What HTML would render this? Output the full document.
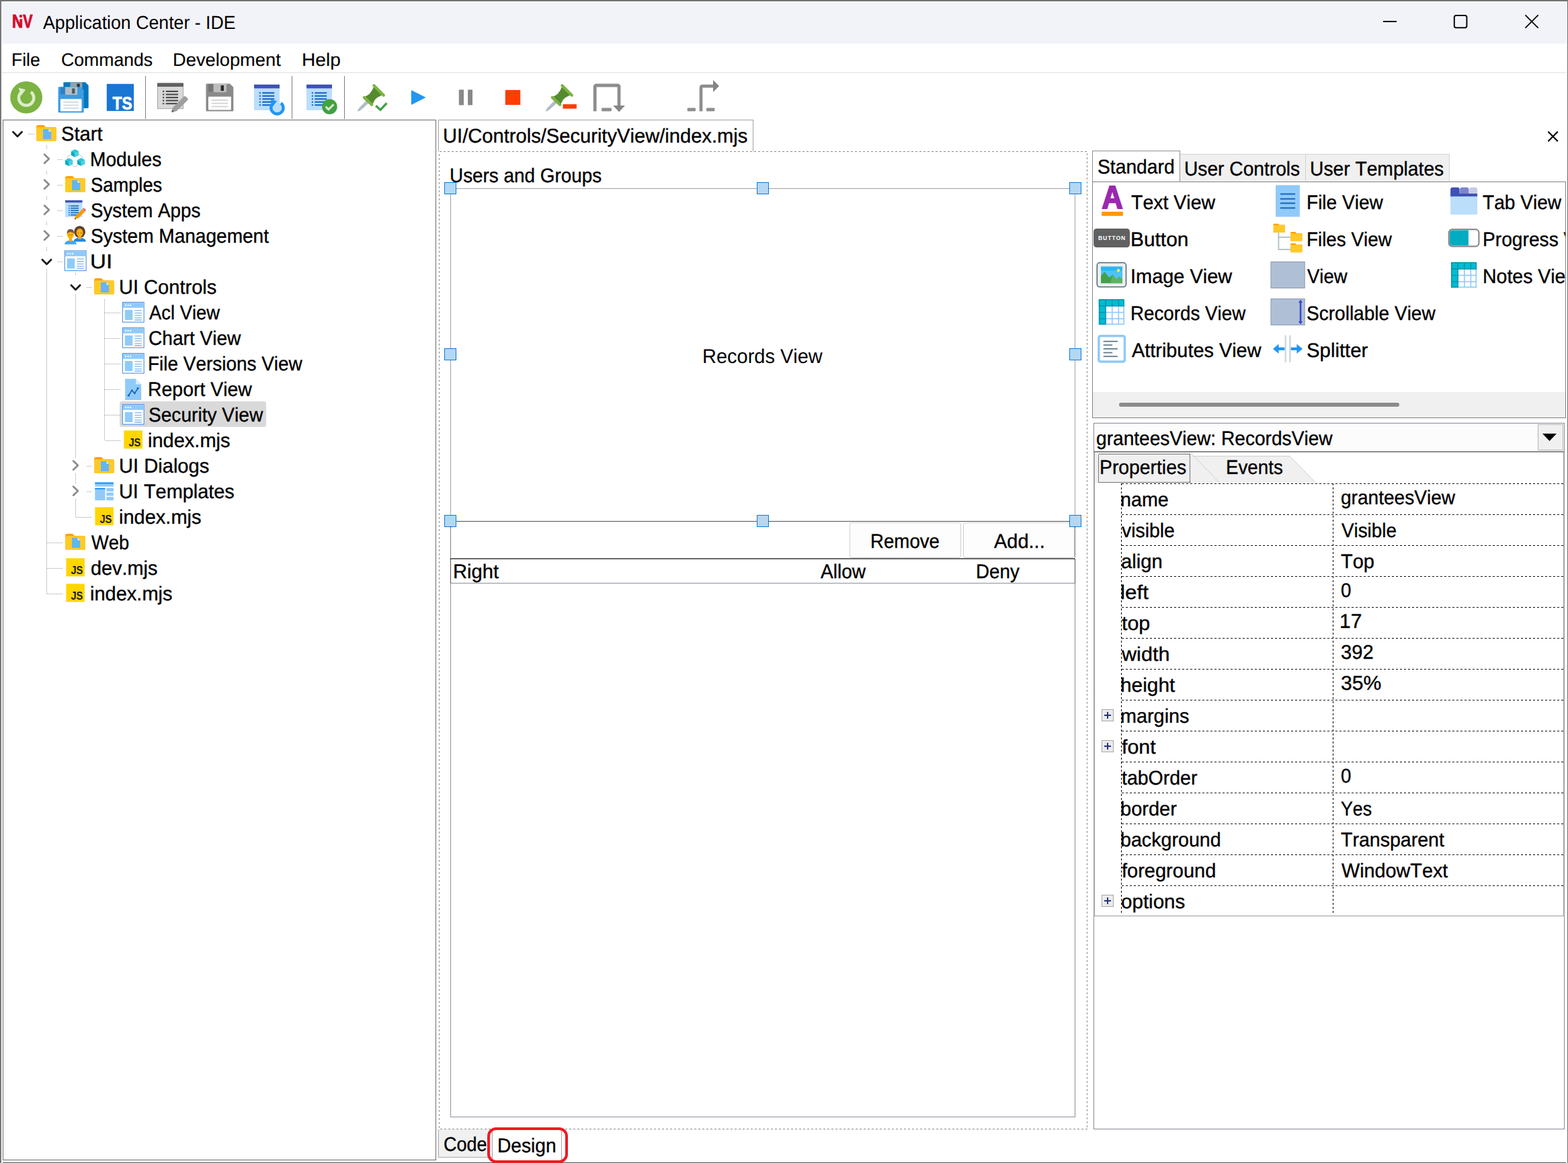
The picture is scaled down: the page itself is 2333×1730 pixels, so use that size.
<!DOCTYPE html>
<html lang="en"><head><meta charset="utf-8"><title>Application Center - IDE</title>
<style>
*{box-sizing:border-box;margin:0;padding:0}
html,body{width:2333px;height:1730px;overflow:hidden;background:#fff}
body{position:relative;font-family:"Liberation Sans",sans-serif;color:#000}
.b{position:absolute;display:block}
.t{position:absolute;white-space:pre;display:block;transform-origin:0 0;font-kerning:none;font-variant-ligatures:none;text-rendering:geometricPrecision}
</style></head><body>
<div class="b" style="left:0px;top:0px;width:2333px;height:65px;background:#f2f3f9"></div>
<div class="b" style="left:0px;top:0px;width:2333px;height:2px;background:#737373"></div>
<div class="b" style="left:0px;top:2px;width:2px;height:1728px;background:#777777"></div>
<div class="b" style="left:2px;top:2px;width:1px;height:63px;background:#fbfbff"></div>
<div class="b" style="left:2px;top:2px;width:2330px;height:1px;background:#fbfbff"></div>
<div class="b" style="left:2332px;top:2px;width:1px;height:1728px;background:#6c6c6c"></div>
<div class="b" style="left:4px;top:1729px;width:2326px;height:1px;background:#545454"></div>
<div class="b" style="left:2px;top:107px;width:2329px;height:2px;background:#ededed"></div>
<div class="b" style="left:216px;top:113px;width:1px;height:64px;background:#7e7e7e"></div>
<div class="b" style="left:434px;top:113px;width:1px;height:64px;background:#7e7e7e"></div>
<div class="b" style="left:512px;top:113px;width:1px;height:64px;background:#7e7e7e"></div>
<div class="b" style="left:4px;top:178px;width:645px;height:1548px;border:1px solid #6c6c6c;background:#fff"></div>
<div class="b" style="left:178px;top:597px;width:218px;height:38px;background:#d9d9d9;border-radius:3px"></div>
<div class="b" style="left:652px;top:178px;width:469px;height:47px;border:1px solid #a3a3a3;border-bottom:none;background:#fff"></div>
<div class="b" style="left:670px;top:280px;width:930px;height:496px;border:1px solid #a0a0a0;border-bottom:none"></div>
<div class="b" style="left:1263.5px;top:777px;width:166px;height:52.5px;border:1px solid #d0d0d0;border-radius:4px;background:#fdfdfd"></div>
<div class="b" style="left:1432.5px;top:777px;width:166.5px;height:52.5px;border:1px solid #d0d0d0;border-radius:4px;background:#fdfdfd"></div>
<div class="b" style="left:670px;top:831px;width:930px;height:831px;border:1px solid #8a8f99;border-top:none"></div>
<div class="b" style="left:671px;top:867px;width:928px;height:1px;background:#8a8f99"></div>
<div class="b" style="left:652px;top:1680px;width:81px;height:42px;background:#f0f0f0;border:1px solid #ababab;border-top:none;border-right:none"></div>
<div class="b" style="left:732px;top:1680px;width:104px;height:46px;background:#fff;border:1px solid #a6a6a6;border-top:none;border-bottom:none"></div>
<div class="b" style="left:1625px;top:270px;width:705px;height:352px;border:1px solid #828282;background:#fff"></div>
<div class="b" style="left:1626px;top:583px;width:703px;height:38px;background:#f0f0f0"></div>
<div class="b" style="left:1665px;top:598.5px;width:417px;height:6.2px;background:#8b8b8b;border-radius:3.1px"></div>
<div class="b" style="left:1755px;top:229px;width:188px;height:42px;background:#f0f0f0;border:1px solid #d2d2d2;border-bottom:1px solid #828282"></div>
<div class="b" style="left:1942px;top:229px;width:215px;height:42px;background:#f0f0f0;border:1px solid #d2d2d2;border-bottom:1px solid #828282"></div>
<div class="b" style="left:1625px;top:224px;width:131px;height:46px;background:#fff;border:1px solid #909090;border-bottom:none"></div>
<div class="b" style="left:2150px;top:271px;width:179px;height:312px;overflow:hidden"><span class="t" style="left:56.11px;top:11px;font-size:29.5px;line-height:39px;height:39px;transform:scaleX(0.9520);-webkit-text-stroke:0.35px #000;">Tab View</span><span class="t" style="left:55.93px;top:66px;font-size:29.5px;line-height:39px;height:39px;transform:scaleX(0.9550);-webkit-text-stroke:0.35px #000;">Progress View</span><span class="t" style="left:56.41px;top:121px;font-size:29.5px;line-height:39px;height:39px;transform:scaleX(0.9650);-webkit-text-stroke:0.35px #000;">Notes View</span></div>
<div class="b" style="left:1627px;top:629px;width:701px;height:1051px;border:1px solid #868b94;background:#fff"></div>
<div class="b" style="left:1627px;top:672px;width:2px;height:691px;background:#a2a2a2"></div>
<div class="b" style="left:2326px;top:672px;width:2px;height:691px;background:#a2a2a2"></div>
<div class="b" style="left:1628px;top:630px;width:698px;height:42px;background:#fcfcfc"></div>
<div class="b" style="left:1627px;top:671px;width:701px;height:2px;background:#8a8a8a"></div>
<div class="b" style="left:2288px;top:631px;width:38px;height:39px;background:#f0f0f0;border:1px solid #b4b4b4"></div>
<div class="b" style="left:1629px;top:673px;width:697px;height:46px;background:#fff"></div>
<div class="b" style="left:1639px;top:1055px;width:18px;height:18px;border:1px solid #a8a8a8;background:#ebebeb"></div>
<div class="b" style="left:1639px;top:1101px;width:18px;height:18px;border:1px solid #a8a8a8;background:#ebebeb"></div>
<div class="b" style="left:1639px;top:1331px;width:18px;height:18px;border:1px solid #a8a8a8;background:#ebebeb"></div>
<div class="b" style="left:1629px;top:1362px;width:697px;height:1px;background:#9a9a9a"></div>
<svg class="b" style="left:0;top:0;pointer-events:none" width="2333" height="1730" viewBox="0 0 2333 1730">
<text transform="translate(19.40 41.2) scale(0.8255 1)" x="-1.82" y="0" font-family="Liberation Sans, sans-serif" font-weight="700" font-size="27.2" fill="#d60a2b" stroke="#d60a2b" stroke-width="0.9">N</text><text transform="translate(34.40 41.2) scale(0.7878 1)" x="-0.19" y="0" font-family="Liberation Sans, sans-serif" font-weight="700" font-size="27.2" fill="#d60a2b" stroke="#d60a2b" stroke-width="0.9">V</text><rect x="28.4" y="20" width="5.2" height="8.3" fill="#f2f3f9"/><circle cx="30.9" cy="24.1" r="2.25" fill="#d60a2b"/>
<path d="M2058 32 H2078" stroke="#0a0a0a" stroke-width="2" fill="none"/>
<rect x="2163.8" y="23" width="18.6" height="18.2" rx="2.8" fill="none" stroke="#0a0a0a" stroke-width="2"/>
<path d="M2269.5 22.3 L2288.7 41.7 M2288.7 22.3 L2269.5 41.7" stroke="#0a0a0a" stroke-width="1.9" fill="none"/>
<circle cx="39.1" cy="144.9" r="23.9" fill="#7cb342"/>
<path d="M46.00 136.77 A11.2 11.2 0 1 1 32.20 136.77" fill="none" stroke="#dcedc8" stroke-width="4.4"/><path d="M27.55 130.57 L38.09 133.36 L31.58 142.04 Z" fill="#dcedc8"/>
<g transform="translate(94.4 122.2)"><path d="M1 0 H32.451 L37.3 4.849 V37.8 Q37.3 38.8 36.3 38.8 H1 Q0 38.8 0 37.8 V1 Q0 0 1 0 Z" fill="#0277bd"/><path d="M10.071 0.3 H27.975 V10.476 Q27.975 12.028 26.483 12.028 H11.563 Q10.071 12.028 10.071 10.476 Z" fill="#90a4ae"/><rect x="20.142" y="2.328" width="4.103" height="7.76" fill="#263238"/><rect x="3.1705" y="18.236" width="30.959" height="18.624" rx="0.8" fill="#0277bd"/><rect x="7.46" y="22.31" width="22.38" height="1.746" fill="#0277bd"/><rect x="7.46" y="26.772" width="22.38" height="1.746" fill="#0277bd"/><rect x="7.46" y="31.234" width="22.38" height="1.746" fill="#0277bd"/></g>
<g transform="translate(86.6 129.2)"><path d="M1 0 H33.147 L38.1 4.953 V37.3 Q38.1 38.3 37.1 38.3 H1 Q0 38.3 0 37.3 V1 Q0 0 1 0 Z" fill="#3d9be0"/><rect x="3.429" y="0.4" width="7.62" height="10.724" fill="#2d80c3"/><path d="M10.287 0.3 H28.575 V10.341 Q28.575 11.873 27.051 11.873 H11.811 Q10.287 11.873 10.287 10.341 Z" fill="#b0bec5"/><rect x="20.574" y="2.298" width="4.191" height="7.66" fill="#455a64"/><rect x="3.2385" y="18.001" width="31.623" height="18.384" rx="0.8" fill="#ffffff"/><rect x="7.62" y="22.0225" width="22.86" height="1.7235" fill="#cfd8dc"/><rect x="7.62" y="26.427" width="22.86" height="1.7235" fill="#cfd8dc"/><rect x="7.62" y="30.8315" width="22.86" height="1.7235" fill="#cfd8dc"/></g>
<rect x="158.8" y="124.8" width="40.3" height="40.3" fill="#1976d2"/>
<text x="167.6" y="162.8" font-family="Liberation Sans, sans-serif" font-weight="700" font-size="27.6" fill="#fff" stroke="#fff" stroke-width="0.7" textLength="29.2" lengthAdjust="spacingAndGlyphs">TS</text>
<g transform="translate(234 123.5)"><rect x="0.5" y="0.5" width="38" height="37.6" fill="#d9d9d9" stroke="#a6a6a6" stroke-width="1"/><rect x="0" y="0" width="39" height="5.6" rx="1" fill="#616161"/><rect x="8" y="11.4" width="2.3" height="2.1" fill="#4a4a4a"/><rect x="12.8" y="11.4" width="18.2" height="2.1" fill="#4a4a4a"/><rect x="8" y="15.95" width="2.3" height="2.1" fill="#4a4a4a"/><rect x="12.8" y="15.95" width="18.2" height="2.1" fill="#4a4a4a"/><rect x="8" y="20.5" width="2.3" height="2.1" fill="#4a4a4a"/><rect x="12.8" y="20.5" width="18.2" height="2.1" fill="#4a4a4a"/><rect x="8" y="25.05" width="2.3" height="2.1" fill="#4a4a4a"/><rect x="12.8" y="25.05" width="18.2" height="2.1" fill="#4a4a4a"/><rect x="8" y="29.6" width="2.3" height="2.1" fill="#4a4a4a"/><rect x="12.8" y="29.6" width="18.2" height="2.1" fill="#4a4a4a"/><path d="M21.4 41.8 L23.6 36 L39.6 20 Q41 18.8 42.4 20 L45.2 22.8 Q46.4 24.2 45.2 25.6 L29 41.6 L22 44 Z" fill="#9e9e9e"/><path d="M21.4 41.8 L22.4 39.6 L24.6 41.8 L22 43.6 Z" fill="#616161"/></g>
<g transform="translate(306.5 124.5)"><path d="M1 0 H35.496 L40.8 5.304 V40 Q40.8 41 39.8 41 H1 Q0 41 0 40 V1 Q0 0 1 0 Z" fill="#8a8a8a"/><rect x="3.672" y="0.4" width="8.16" height="11.48" fill="#757575"/><path d="M11.016 0.3 H30.6 V11.07 Q30.6 12.71 28.968 12.71 H12.648 Q11.016 12.71 11.016 11.07 Z" fill="#bdbdbd"/><rect x="22.032" y="2.46" width="4.488" height="8.2" fill="#2b2b2b"/><rect x="3.468" y="19.27" width="33.864" height="19.68" rx="0.8" fill="#ffffff"/><rect x="8.16" y="23.575" width="24.48" height="1.845" fill="#d4d4d4"/><rect x="8.16" y="28.29" width="24.48" height="1.845" fill="#d4d4d4"/><rect x="8.16" y="33.005" width="24.48" height="1.845" fill="#d4d4d4"/></g>
<g transform="translate(378 125.8)"><rect width="38" height="38.2" fill="#bbdefb"/><rect width="38" height="5.6" fill="#3f51b5"/><rect x="7.8" y="11.4" width="2.1" height="2.1" fill="#1565c0"/><rect x="12.2" y="11.4" width="18" height="2.1" fill="#1565c0"/><rect x="7.8" y="15.9" width="2.1" height="2.1" fill="#1565c0"/><rect x="12.2" y="15.9" width="18" height="2.1" fill="#1565c0"/><rect x="7.8" y="20.4" width="2.1" height="2.1" fill="#1565c0"/><rect x="12.2" y="20.4" width="18" height="2.1" fill="#1565c0"/><rect x="7.8" y="24.9" width="2.1" height="2.1" fill="#1565c0"/><rect x="12.2" y="24.9" width="18" height="2.1" fill="#1565c0"/><rect x="7.8" y="29.4" width="2.1" height="2.1" fill="#1565c0"/><rect x="12.2" y="29.4" width="18" height="2.1" fill="#1565c0"/></g>
<circle cx="412.4" cy="160.4" r="8" fill="#bbdefb"/>
<path d="M418.00 153.23 A9.1 9.1 0 1 1 406.80 153.23" fill="none" stroke="#2196f3" stroke-width="4.4"/><path d="M402.60 147.63 L412.12 150.15 L406.24 157.99 Z" fill="#2196f3"/>
<g transform="translate(456 125.8)"><rect width="38" height="38.2" fill="#bbdefb"/><rect width="38" height="5.6" fill="#3f51b5"/><rect x="7.8" y="11.4" width="2.1" height="2.1" fill="#1565c0"/><rect x="12.2" y="11.4" width="18" height="2.1" fill="#1565c0"/><rect x="7.8" y="15.9" width="2.1" height="2.1" fill="#1565c0"/><rect x="12.2" y="15.9" width="18" height="2.1" fill="#1565c0"/><rect x="7.8" y="20.4" width="2.1" height="2.1" fill="#1565c0"/><rect x="12.2" y="20.4" width="18" height="2.1" fill="#1565c0"/><rect x="7.8" y="24.9" width="2.1" height="2.1" fill="#1565c0"/><rect x="12.2" y="24.9" width="18" height="2.1" fill="#1565c0"/><rect x="7.8" y="29.4" width="2.1" height="2.1" fill="#1565c0"/><rect x="12.2" y="29.4" width="18" height="2.1" fill="#1565c0"/></g>
<circle cx="490.4" cy="158.7" r="11.3" fill="#43a047"/>
<path d="M484.6 158.6 L488.9 162.8 L496.4 155.2" fill="none" stroke="#dcedc8" stroke-width="3"/>
<g transform="translate(531.8 124)"><path d="M0.3 41.6 Q0.2 39.4 2.6 36.6 L13.2 25.6 L16.8 29.2 L5.4 39.6 Q2.4 42 0.3 41.6 Z" fill="#b0bec5"/><path d="M24.4 4.9 L37.1 17.2 Q29.6 20.4 26.3 24.1 Q24.6 26.6 22.8 31.1 L11.4 19.6 Q15.6 17.6 17.9 15.7 Q21.4 12 24.4 4.9 Z" fill="#558b2f"/><path d="M24.6 3.2 L39 17.7" stroke="#7cb342" stroke-width="4.3" stroke-linecap="round" fill="none"/><path d="M10 21 L21.4 31.8" stroke="#7cb342" stroke-width="4.3" stroke-linecap="round" fill="none"/></g>
<path d="M559.2 157.2 L566 163.4 L575.4 153.4" fill="none" stroke="#43a047" stroke-width="3.4"/>
<path d="M611.9 133.9 L633.6 145 L611.9 156 Z" fill="#2196f3"/>
<rect x="682.8" y="133.4" width="7.2" height="23" fill="#888"/><rect x="696.1" y="133.4" width="6.9" height="23" fill="#888"/>
<rect x="751.8" y="133.9" width="22.4" height="22.1" fill="#ff3d00"/>
<g transform="translate(811.8 124)"><path d="M0.3 41.6 Q0.2 39.4 2.6 36.6 L13.2 25.6 L16.8 29.2 L5.4 39.6 Q2.4 42 0.3 41.6 Z" fill="#b0bec5"/><path d="M24.4 4.9 L37.1 17.2 Q29.6 20.4 26.3 24.1 Q24.6 26.6 22.8 31.1 L11.4 19.6 Q15.6 17.6 17.9 15.7 Q21.4 12 24.4 4.9 Z" fill="#558b2f"/><path d="M24.6 3.2 L39 17.7" stroke="#7cb342" stroke-width="4.3" stroke-linecap="round" fill="none"/><path d="M10 21 L21.4 31.8" stroke="#7cb342" stroke-width="4.3" stroke-linecap="round" fill="none"/></g>
<rect x="837.5" y="155.1" width="20.4" height="6.5" fill="#ff3d00"/>
<path d="M885.2 165.5 V129.6 Q885.2 127 887.8 127 H918.4 Q921 127 921 129.6 V158" fill="none" stroke="#8e8e8e" stroke-width="4.8"/>
<path d="M912.3 157 H929.9 L921.1 166.4 Z" fill="#858585"/>
<rect x="895.1" y="160.6" width="14.8" height="4.9" rx="1" fill="#8e8e8e"/>
<path d="M1043 165.5 V130.8 Q1043 128.2 1045.6 128.2 H1062" fill="none" stroke="#8e8e8e" stroke-width="4.7"/>
<path d="M1061 119 L1070 128 L1061 136.9 Z" fill="#858585"/>
<rect x="1022.7" y="160.6" width="12.3" height="4.9" rx="1" fill="#8e8e8e"/><rect x="1051" y="160.6" width="12.3" height="4.9" rx="1" fill="#8e8e8e"/>
<g transform="translate(54 186)"><path d="M0 3 Q0 0 3 0 H11 L14 3 H27 Q30 3 30 6 V21 Q30 24 27 24 H3 Q0 24 0 21 Z" fill="#ffa000"/><path d="M0 5.5 Q0 3.2 2.5 3.2 H27.5 Q30 3.2 30 5.7 V21.5 Q30 24 27.5 24 H2.5 Q0 24 0 21.5 Z" fill="#ffca28"/><path d="M10 6 H18.5 L22.2 9.7 V21 H10 Z" fill="#64b5f6"/><path d="M18.5 6 L22.2 9.7 H18.5 Z" fill="#e3f2fd"/></g>
<path d="M19.4 196.3 L26 203 L32.6 196.3" fill="none" stroke="#1a1a1a" stroke-width="2.7" stroke-linecap="round" stroke-linejoin="round"/>
<path d="M42 199.5 H51" stroke="#9a9a9a" stroke-width="1" stroke-dasharray="1 1" shape-rendering="crispEdges" fill="none"/>
<path d="M111.6 226.5 L122.6 233 L122.6 242 L111.6 248 L100.6 242 L100.6 233 Z" fill="none" stroke="#cfd8dc" stroke-width="1.2"/><path d="M111.6 221.9 L117.3 224.9 L111.6 227.9 L105.9 224.9 Z" fill="#26c6da"/><path d="M105.9 224.9 L111.6 227.9 L111.6 233.9 L105.9 230.9 Z" fill="#00acc1"/><path d="M117.3 224.9 L111.6 227.9 L111.6 233.9 L117.3 230.9 Z" fill="#4dd0e1"/><path d="M102.6 235.3 L108.3 238.3 L102.6 241.3 L96.9 238.3 Z" fill="#26c6da"/><path d="M96.9 238.3 L102.6 241.3 L102.6 247.3 L96.9 244.3 Z" fill="#00acc1"/><path d="M108.3 238.3 L102.6 241.3 L102.6 247.3 L108.3 244.3 Z" fill="#4dd0e1"/><path d="M120.7 235.1 L126.4 238.1 L120.7 241.1 L115 238.1 Z" fill="#26c6da"/><path d="M115 238.1 L120.7 241.1 L120.7 247.1 L115 244.1 Z" fill="#00acc1"/><path d="M126.4 238.1 L120.7 241.1 L120.7 247.1 L126.4 244.1 Z" fill="#4dd0e1"/>
<path d="M66.1 229.7 L72.9 236.2 L66.1 242.7" fill="none" stroke="#8b8b8b" stroke-width="2.7" stroke-linecap="round" stroke-linejoin="round"/>
<path d="M85.5 237.5 H94" stroke="#9a9a9a" stroke-width="1" stroke-dasharray="1 1" shape-rendering="crispEdges" fill="none"/>
<g transform="translate(97 262)"><path d="M0 3 Q0 0 3 0 H11 L14 3 H27 Q30 3 30 6 V21 Q30 24 27 24 H3 Q0 24 0 21 Z" fill="#ffa000"/><path d="M0 5.5 Q0 3.2 2.5 3.2 H27.5 Q30 3.2 30 5.7 V21.5 Q30 24 27.5 24 H2.5 Q0 24 0 21.5 Z" fill="#ffca28"/><path d="M10 6 H18.5 L22.2 9.7 V21 H10 Z" fill="#64b5f6"/><path d="M18.5 6 L22.2 9.7 H18.5 Z" fill="#e3f2fd"/></g>
<path d="M66.1 267.7 L72.9 274.2 L66.1 280.7" fill="none" stroke="#8b8b8b" stroke-width="2.7" stroke-linecap="round" stroke-linejoin="round"/>
<path d="M85.5 275.5 H94" stroke="#9a9a9a" stroke-width="1" stroke-dasharray="1 1" shape-rendering="crispEdges" fill="none"/>
<g transform="translate(97.1 297.9)"><rect x="0" y="0" width="25.4" height="25" fill="#bbdefb"/><rect x="0" y="0" width="25.4" height="3.4" fill="#3f51b5"/><rect x="5" y="7.6" width="1.7" height="1.7" fill="#1565c0"/><rect x="8" y="7.6" width="12" height="1.7" fill="#1565c0"/><rect x="5" y="10.95" width="1.7" height="1.7" fill="#1565c0"/><rect x="8" y="10.95" width="12" height="1.7" fill="#1565c0"/><rect x="5" y="14.3" width="1.7" height="1.7" fill="#1565c0"/><rect x="8" y="14.3" width="12" height="1.7" fill="#1565c0"/><rect x="5" y="17.65" width="1.7" height="1.7" fill="#1565c0"/><rect x="8" y="17.65" width="12" height="1.7" fill="#1565c0"/><rect x="5" y="21" width="1.7" height="1.7" fill="#1565c0"/><rect x="8" y="21" width="12" height="1.7" fill="#1565c0"/><path d="M14 26.5 L16 22.5 L25.5 13 L29.3 16.8 L19.8 26.3 L13.8 28.6 Z" fill="#ff9800"/><path d="M25.5 13 L26.9 11.6 Q27.6 11 28.3 11.6 L30.6 14 Q31.2 14.7 30.6 15.4 L29.3 16.8 Z" fill="#e57373"/><path d="M13.8 28.6 L14.6 26.2 L16.2 27.7 Z" fill="#5d4037"/></g>
<path d="M66.1 305.7 L72.9 312.2 L66.1 318.7" fill="none" stroke="#8b8b8b" stroke-width="2.7" stroke-linecap="round" stroke-linejoin="round"/>
<path d="M85.5 313.5 H94" stroke="#9a9a9a" stroke-width="1" stroke-dasharray="1 1" shape-rendering="crispEdges" fill="none"/>
<g transform="translate(96 335.6)"><path d="M13.5 24 Q14 18.5 22.5 18 Q31.5 18.5 32 24 Z" fill="#1e88e5"/><ellipse cx="22.6" cy="9.3" rx="8.4" ry="9" fill="#5d4037"/><rect x="20.3" y="14" width="4.6" height="6" fill="#f9a825"/><ellipse cx="22.6" cy="10.4" rx="5" ry="6" fill="#ffb300"/><path d="M0 28 Q0.5 22.5 8.8 22 Q17.5 22.5 18 28 Z" fill="#42a5f5"/><rect x="6.7" y="18" width="4.4" height="5.6" fill="#f9a825"/><ellipse cx="8.9" cy="13.4" rx="5" ry="6" fill="#ffb300"/><path d="M3.6 12.6 Q3.2 5.2 9 5.2 Q14.6 5.2 14.2 12.6 Q12.6 9.4 8.2 9.4 Q5 9.6 3.6 12.6 Z" fill="#795548"/><circle cx="7" cy="14" r="0.7" fill="#6d4c41"/><circle cx="10.8" cy="14" r="0.7" fill="#6d4c41"/><circle cx="20.6" cy="11" r="0.7" fill="#6d4c41"/><circle cx="24.6" cy="11" r="0.7" fill="#6d4c41"/></g>
<path d="M66.1 343.7 L72.9 350.2 L66.1 356.7" fill="none" stroke="#8b8b8b" stroke-width="2.7" stroke-linecap="round" stroke-linejoin="round"/>
<path d="M85.5 351.5 H94" stroke="#9a9a9a" stroke-width="1" stroke-dasharray="1 1" shape-rendering="crispEdges" fill="none"/>
<g transform="translate(95.7 372.4)"><rect x="0.6" y="0.6" width="31.8" height="29.6" fill="#fff" stroke="#5b9be3" stroke-width="1.2"/><rect x="1.2" y="1.2" width="30.6" height="7.6" fill="#90caf9"/><rect x="4.2" y="4" width="2" height="2" fill="#fff"/><rect x="7.8" y="4" width="2" height="2" fill="#fff"/><rect x="11.4" y="4" width="2" height="2" fill="#fff"/><rect x="4" y="12" width="11.5" height="15" fill="#90caf9"/><path d="M18.6 12.8 H29 M18.6 16.6 H29 M18.6 20.2 H29 M18.6 23.8 H29 M18.6 27 H29" stroke="#7fb4ee" stroke-width="1.3"/></g>
<path d="M62.9 386.3 L69.5 393 L76.1 386.3" fill="none" stroke="#1a1a1a" stroke-width="2.7" stroke-linecap="round" stroke-linejoin="round"/>
<path d="M85.5 389.5 H94" stroke="#9a9a9a" stroke-width="1" stroke-dasharray="1 1" shape-rendering="crispEdges" fill="none"/>
<g transform="translate(140 414)"><path d="M0 3 Q0 0 3 0 H11 L14 3 H27 Q30 3 30 6 V21 Q30 24 27 24 H3 Q0 24 0 21 Z" fill="#ffa000"/><path d="M0 5.5 Q0 3.2 2.5 3.2 H27.5 Q30 3.2 30 5.7 V21.5 Q30 24 27.5 24 H2.5 Q0 24 0 21.5 Z" fill="#ffca28"/><path d="M10 6 H18.5 L22.2 9.7 V21 H10 Z" fill="#64b5f6"/><path d="M18.5 6 L22.2 9.7 H18.5 Z" fill="#e3f2fd"/></g>
<path d="M105.9 424.3 L112.5 431 L119.1 424.3" fill="none" stroke="#1a1a1a" stroke-width="2.7" stroke-linecap="round" stroke-linejoin="round"/>
<path d="M128.5 427.5 H137" stroke="#9a9a9a" stroke-width="1" stroke-dasharray="1 1" shape-rendering="crispEdges" fill="none"/>
<g transform="translate(181.8 449)"><rect x="0.6" y="0.6" width="31.8" height="29.6" fill="#fff" stroke="#5b9be3" stroke-width="1.2"/><rect x="1.2" y="1.2" width="30.6" height="7.6" fill="#90caf9"/><rect x="4.2" y="4" width="2" height="2" fill="#fff"/><rect x="7.8" y="4" width="2" height="2" fill="#fff"/><rect x="11.4" y="4" width="2" height="2" fill="#fff"/><rect x="4" y="12" width="11.5" height="15" fill="#90caf9"/><path d="M18.6 12.8 H29 M18.6 16.6 H29 M18.6 20.2 H29 M18.6 23.8 H29 M18.6 27 H29" stroke="#7fb4ee" stroke-width="1.3"/></g>
<path d="M155.5 465.5 H180" stroke="#9a9a9a" stroke-width="1" stroke-dasharray="1 1" shape-rendering="crispEdges" fill="none"/>
<g transform="translate(181.8 487)"><rect x="0.6" y="0.6" width="31.8" height="29.6" fill="#fff" stroke="#5b9be3" stroke-width="1.2"/><rect x="1.2" y="1.2" width="30.6" height="7.6" fill="#90caf9"/><rect x="4.2" y="4" width="2" height="2" fill="#fff"/><rect x="7.8" y="4" width="2" height="2" fill="#fff"/><rect x="11.4" y="4" width="2" height="2" fill="#fff"/><rect x="4" y="12" width="11.5" height="15" fill="#90caf9"/><path d="M18.6 12.8 H29 M18.6 16.6 H29 M18.6 20.2 H29 M18.6 23.8 H29 M18.6 27 H29" stroke="#7fb4ee" stroke-width="1.3"/></g>
<path d="M155.5 503.5 H180" stroke="#9a9a9a" stroke-width="1" stroke-dasharray="1 1" shape-rendering="crispEdges" fill="none"/>
<g transform="translate(181.8 525)"><rect x="0.6" y="0.6" width="31.8" height="29.6" fill="#fff" stroke="#5b9be3" stroke-width="1.2"/><rect x="1.2" y="1.2" width="30.6" height="7.6" fill="#90caf9"/><rect x="4.2" y="4" width="2" height="2" fill="#fff"/><rect x="7.8" y="4" width="2" height="2" fill="#fff"/><rect x="11.4" y="4" width="2" height="2" fill="#fff"/><rect x="4" y="12" width="11.5" height="15" fill="#90caf9"/><path d="M18.6 12.8 H29 M18.6 16.6 H29 M18.6 20.2 H29 M18.6 23.8 H29 M18.6 27 H29" stroke="#7fb4ee" stroke-width="1.3"/></g>
<path d="M155.5 541.5 H180" stroke="#9a9a9a" stroke-width="1" stroke-dasharray="1 1" shape-rendering="crispEdges" fill="none"/>
<g transform="translate(186.2 563.4)"><path d="M0 0 H16 L24 8 V31.5 H0 Z" fill="#90caf9"/><path d="M16 0 L24 8 H16 Z" fill="#e1f0fd"/><path d="M5.2 24.8 L10 17.5 L14.2 21.6 L19 14.2" fill="none" stroke="#1565c0" stroke-width="1.7"/><circle cx="5.2" cy="24.8" r="1.6" fill="#1565c0"/><circle cx="10" cy="17.5" r="1.4" fill="#1565c0"/><circle cx="14.2" cy="21.6" r="1.4" fill="#1565c0"/><circle cx="19" cy="14.2" r="1.6" fill="#1565c0"/></g>
<path d="M155.5 579.5 H180" stroke="#9a9a9a" stroke-width="1" stroke-dasharray="1 1" shape-rendering="crispEdges" fill="none"/>
<g transform="translate(181.8 601)"><rect x="0.6" y="0.6" width="31.8" height="29.6" fill="#fff" stroke="#5b9be3" stroke-width="1.2"/><rect x="1.2" y="1.2" width="30.6" height="7.6" fill="#90caf9"/><rect x="4.2" y="4" width="2" height="2" fill="#fff"/><rect x="7.8" y="4" width="2" height="2" fill="#fff"/><rect x="11.4" y="4" width="2" height="2" fill="#fff"/><rect x="4" y="12" width="11.5" height="15" fill="#90caf9"/><path d="M18.6 12.8 H29 M18.6 16.6 H29 M18.6 20.2 H29 M18.6 23.8 H29 M18.6 27 H29" stroke="#7fb4ee" stroke-width="1.3"/></g>
<path d="M155.5 617.5 H180" stroke="#9a9a9a" stroke-width="1" stroke-dasharray="1 1" shape-rendering="crispEdges" fill="none"/>
<g transform="translate(184.4 640.4)"><rect width="27.5" height="27" fill="#ffd600"/><text x="7" y="23.8" font-family="Liberation Sans, sans-serif" font-weight="700" font-size="17" fill="#1c1c1c" textLength="18" lengthAdjust="spacingAndGlyphs">JS</text></g>
<path d="M155.5 655.5 H180" stroke="#9a9a9a" stroke-width="1" stroke-dasharray="1 1" shape-rendering="crispEdges" fill="none"/>
<g transform="translate(140 680)"><path d="M0 3 Q0 0 3 0 H11 L14 3 H27 Q30 3 30 6 V21 Q30 24 27 24 H3 Q0 24 0 21 Z" fill="#ffa000"/><path d="M0 5.5 Q0 3.2 2.5 3.2 H27.5 Q30 3.2 30 5.7 V21.5 Q30 24 27.5 24 H2.5 Q0 24 0 21.5 Z" fill="#ffca28"/><path d="M10 6 H18.5 L22.2 9.7 V21 H10 Z" fill="#64b5f6"/><path d="M18.5 6 L22.2 9.7 H18.5 Z" fill="#e3f2fd"/></g>
<path d="M109.1 685.7 L115.9 692.2 L109.1 698.7" fill="none" stroke="#8b8b8b" stroke-width="2.7" stroke-linecap="round" stroke-linejoin="round"/>
<path d="M128.5 693.5 H137" stroke="#9a9a9a" stroke-width="1" stroke-dasharray="1 1" shape-rendering="crispEdges" fill="none"/>
<g transform="translate(141.3 717.3)"><rect x="0" y="0" width="27.6" height="6.5" fill="#90caf9"/><rect x="0" y="0.4" width="27.6" height="2" fill="#2196f3"/><rect x="0" y="8.5" width="15.2" height="18.5" fill="#90caf9"/><rect x="0" y="8.7" width="15.2" height="1.9" fill="#2196f3"/><rect x="17" y="8.7" width="10.6" height="5" fill="#90caf9"/><rect x="17" y="15.3" width="10.6" height="5" fill="#90caf9"/><rect x="17" y="21.8" width="10.6" height="5.2" fill="#90caf9"/></g>
<path d="M109.1 723.7 L115.9 730.2 L109.1 736.7" fill="none" stroke="#8b8b8b" stroke-width="2.7" stroke-linecap="round" stroke-linejoin="round"/>
<path d="M128.5 731.5 H137" stroke="#9a9a9a" stroke-width="1" stroke-dasharray="1 1" shape-rendering="crispEdges" fill="none"/>
<g transform="translate(141.4 754.4)"><rect width="27.5" height="27" fill="#ffd600"/><text x="7" y="23.8" font-family="Liberation Sans, sans-serif" font-weight="700" font-size="17" fill="#1c1c1c" textLength="18" lengthAdjust="spacingAndGlyphs">JS</text></g>
<path d="M112.5 769.5 H137" stroke="#9a9a9a" stroke-width="1" stroke-dasharray="1 1" shape-rendering="crispEdges" fill="none"/>
<g transform="translate(97 794)"><path d="M0 3 Q0 0 3 0 H11 L14 3 H27 Q30 3 30 6 V21 Q30 24 27 24 H3 Q0 24 0 21 Z" fill="#ffa000"/><path d="M0 5.5 Q0 3.2 2.5 3.2 H27.5 Q30 3.2 30 5.7 V21.5 Q30 24 27.5 24 H2.5 Q0 24 0 21.5 Z" fill="#ffca28"/><path d="M10 6 H18.5 L22.2 9.7 V21 H10 Z" fill="#64b5f6"/><path d="M18.5 6 L22.2 9.7 H18.5 Z" fill="#e3f2fd"/></g>
<path d="M69.5 807.5 H94" stroke="#9a9a9a" stroke-width="1" stroke-dasharray="1 1" shape-rendering="crispEdges" fill="none"/>
<g transform="translate(98.4 830.4)"><rect width="27.5" height="27" fill="#ffd600"/><text x="7" y="23.8" font-family="Liberation Sans, sans-serif" font-weight="700" font-size="17" fill="#1c1c1c" textLength="18" lengthAdjust="spacingAndGlyphs">JS</text></g>
<path d="M69.5 845.5 H94" stroke="#9a9a9a" stroke-width="1" stroke-dasharray="1 1" shape-rendering="crispEdges" fill="none"/>
<g transform="translate(98.4 868.4)"><rect width="27.5" height="27" fill="#ffd600"/><text x="7" y="23.8" font-family="Liberation Sans, sans-serif" font-weight="700" font-size="17" fill="#1c1c1c" textLength="18" lengthAdjust="spacingAndGlyphs">JS</text></g>
<path d="M69.5 883.5 H94" stroke="#9a9a9a" stroke-width="1" stroke-dasharray="1 1" shape-rendering="crispEdges" fill="none"/>
<path d="M69.5 216 V221" stroke="#9a9a9a" stroke-width="1" stroke-dasharray="1 1" shape-rendering="crispEdges" fill="none"/>
<path d="M69.5 254 V259" stroke="#9a9a9a" stroke-width="1" stroke-dasharray="1 1" shape-rendering="crispEdges" fill="none"/>
<path d="M69.5 292 V297" stroke="#9a9a9a" stroke-width="1" stroke-dasharray="1 1" shape-rendering="crispEdges" fill="none"/>
<path d="M69.5 330 V335" stroke="#9a9a9a" stroke-width="1" stroke-dasharray="1 1" shape-rendering="crispEdges" fill="none"/>
<path d="M69.5 368 V373" stroke="#9a9a9a" stroke-width="1" stroke-dasharray="1 1" shape-rendering="crispEdges" fill="none"/>
<path d="M69.5 400 V883" stroke="#9a9a9a" stroke-width="1" stroke-dasharray="1 1" shape-rendering="crispEdges" fill="none"/>
<path d="M112.5 406 V410" stroke="#9a9a9a" stroke-width="1" stroke-dasharray="1 1" shape-rendering="crispEdges" fill="none"/>
<path d="M112.5 438 V682" stroke="#9a9a9a" stroke-width="1" stroke-dasharray="1 1" shape-rendering="crispEdges" fill="none"/>
<path d="M112.5 704 V720" stroke="#9a9a9a" stroke-width="1" stroke-dasharray="1 1" shape-rendering="crispEdges" fill="none"/>
<path d="M112.5 742 V769" stroke="#9a9a9a" stroke-width="1" stroke-dasharray="1 1" shape-rendering="crispEdges" fill="none"/>
<path d="M155.5 445 V655" stroke="#9a9a9a" stroke-width="1" stroke-dasharray="1 1" shape-rendering="crispEdges" fill="none"/>
<path d="M2303.4 195.8 L2317.8 210.2 M2317.8 195.8 L2303.4 210.2" stroke="#000" stroke-width="2.2" fill="none"/>
<path d="M653.5 225.5 H1617.5 V1679.5 H653.5 Z" stroke="#8a8a8a" stroke-width="1" stroke-dasharray="3 3" shape-rendering="crispEdges" fill="none"/>
<path d="M671 775.5 H1599 M671 831.5 H1599 M670.5 832 V867 M1599.5 832 V867" stroke="#a0a0a0" stroke-width="1" shape-rendering="crispEdges" fill="none"/>
<path d="M670 775.5 H1600 M670 830.5 H1600 M670 831.5 H1600 M670.5 776 V830 M1599.5 776 V830" stroke="#000" stroke-width="1" stroke-dasharray="1 1" shape-rendering="crispEdges" fill="none"/>
<path d="M1599.5 832 V867" stroke="#000" stroke-width="1" stroke-dasharray="1 1" shape-rendering="crispEdges" fill="none"/>
<path d="M670.5 832 V867" stroke="#000" stroke-width="1" stroke-dasharray="1 1" shape-rendering="crispEdges" fill="none"/>
<text x="1639.6" y="310.2" font-family="Liberation Sans, sans-serif" font-weight="700" font-size="48.6" fill="#9c27b0" stroke="#9c27b0" stroke-width="2.2" stroke-linejoin="miter" textLength="31" lengthAdjust="spacingAndGlyphs">A</text>
<rect x="1639.2" y="314.9" width="31.6" height="6.3" fill="#ff9800"/>
<rect x="1627.1" y="340" width="53.9" height="28" rx="4.5" fill="#616161"/>
<text x="1634" y="357.4" font-family="Liberation Sans, sans-serif" font-weight="700" font-size="8.6" fill="#fff" textLength="40.2" lengthAdjust="spacing">BUTTON</text>
<rect x="1632.3" y="390.8" width="43.2" height="36" rx="4" fill="#eeeeee" stroke="#546e7a" stroke-width="1.6"/>
<rect x="1638.1" y="396.6" width="31.9" height="24.6" fill="#4fc3f7"/>
<rect x="1638.1" y="396.6" width="31.9" height="6" fill="#29b6f6"/>
<path d="M1638.1 421.2 V410 L1643.5 404.4 L1650.6 413 L1655.4 408.6 L1661 415.4 L1665.8 411.4 L1670 415.8 V421.2 Z" fill="#43a047"/>
<path d="M1652 421.2 L1655.4 408.6 L1661 415.4 L1665.8 411.4 L1670 415.8 V421.2 Z" fill="#66bb6a" opacity="0.7"/>
<circle cx="1664" cy="402.3" r="2.2" fill="#ffee58"/>
<g transform="translate(1634.9 445.1)"><rect width="38.1" height="37.9" fill="#fff"/><rect x="0" y="0" width="38.1" height="10.275" fill="#00bcd4"/><rect x="0" y="0" width="10.725" height="37.9" fill="#00bcd4"/><rect x="10.725" y="9.275" width="27.375" height="1.6" fill="#90caf9"/><rect x="9.525" y="10.275" width="1.6" height="27.625" fill="#90caf9"/><rect x="10.725" y="18.75" width="27.375" height="1.6" fill="#90caf9"/><rect x="19.05" y="10.275" width="1.6" height="27.625" fill="#90caf9"/><rect x="10.725" y="28.225" width="27.375" height="1.6" fill="#90caf9"/><rect x="28.575" y="10.275" width="1.6" height="27.625" fill="#90caf9"/><rect x="10.725" y="36.3" width="27.375" height="1.6" fill="#90caf9"/><rect x="36.5" y="10.275" width="1.6" height="27.625" fill="#90caf9"/><rect x="0" y="0" width="1.5" height="10.275" fill="#0097a7"/><rect x="0" y="0" width="10.725" height="1.5" fill="#0097a7"/><rect x="9.525" y="0" width="1.5" height="10.275" fill="#0097a7"/><rect x="0" y="9.475" width="10.725" height="1.5" fill="#0097a7"/><rect x="19.05" y="0" width="1.5" height="10.275" fill="#0097a7"/><rect x="0" y="18.95" width="10.725" height="1.5" fill="#0097a7"/><rect x="28.575" y="0" width="1.5" height="10.275" fill="#0097a7"/><rect x="0" y="28.425" width="10.725" height="1.5" fill="#0097a7"/><rect x="36.6" y="0" width="1.5" height="10.275" fill="#0097a7"/><rect x="0" y="36.4" width="10.725" height="1.5" fill="#0097a7"/><rect x="0" y="0" width="38.1" height="1.5" fill="#0097a7"/><rect x="0" y="9.275" width="38.1" height="1.5" fill="#0097a7"/><rect x="0" y="0" width="1.5" height="37.9" fill="#0097a7"/><rect x="9.325" y="0" width="1.5" height="37.9" fill="#0097a7"/></g>
<g transform="translate(2159 390)"><rect width="38.1" height="37.9" fill="#fff"/><rect x="0" y="0" width="38.1" height="10.275" fill="#00bcd4"/><rect x="0" y="0" width="10.725" height="37.9" fill="#00bcd4"/><rect x="10.725" y="9.275" width="27.375" height="1.6" fill="#90caf9"/><rect x="9.525" y="10.275" width="1.6" height="27.625" fill="#90caf9"/><rect x="10.725" y="18.75" width="27.375" height="1.6" fill="#90caf9"/><rect x="19.05" y="10.275" width="1.6" height="27.625" fill="#90caf9"/><rect x="10.725" y="28.225" width="27.375" height="1.6" fill="#90caf9"/><rect x="28.575" y="10.275" width="1.6" height="27.625" fill="#90caf9"/><rect x="10.725" y="36.3" width="27.375" height="1.6" fill="#90caf9"/><rect x="36.5" y="10.275" width="1.6" height="27.625" fill="#90caf9"/><rect x="0" y="0" width="1.5" height="10.275" fill="#0097a7"/><rect x="0" y="0" width="10.725" height="1.5" fill="#0097a7"/><rect x="9.525" y="0" width="1.5" height="10.275" fill="#0097a7"/><rect x="0" y="9.475" width="10.725" height="1.5" fill="#0097a7"/><rect x="19.05" y="0" width="1.5" height="10.275" fill="#0097a7"/><rect x="0" y="18.95" width="10.725" height="1.5" fill="#0097a7"/><rect x="28.575" y="0" width="1.5" height="10.275" fill="#0097a7"/><rect x="0" y="28.425" width="10.725" height="1.5" fill="#0097a7"/><rect x="36.6" y="0" width="1.5" height="10.275" fill="#0097a7"/><rect x="0" y="36.4" width="10.725" height="1.5" fill="#0097a7"/><rect x="0" y="0" width="38.1" height="1.5" fill="#0097a7"/><rect x="0" y="9.275" width="38.1" height="1.5" fill="#0097a7"/><rect x="0" y="0" width="1.5" height="37.9" fill="#0097a7"/><rect x="9.325" y="0" width="1.5" height="37.9" fill="#0097a7"/></g>
<rect x="1634.9" y="499.7" width="38.5" height="38.4" rx="2.5" fill="#fff" stroke="#90caf9" stroke-width="3.5"/>
<rect x="1641.7" y="506.9" width="21.2" height="1.8" fill="#607d8b"/>
<rect x="1641.7" y="512.4" width="13.4" height="1.8" fill="#607d8b"/>
<rect x="1641.7" y="518" width="21.2" height="1.8" fill="#607d8b"/>
<rect x="1641.7" y="523.7" width="13.4" height="1.8" fill="#607d8b"/>
<rect x="1641.7" y="529.3" width="21.2" height="1.8" fill="#607d8b"/>
<rect x="1898.1" y="275.4" width="35.8" height="47.1" fill="#90caf9"/>
<rect x="1904.9" y="287.6" width="22.2" height="2" fill="#1565c0"/>
<rect x="1904.9" y="294.8" width="22.2" height="2" fill="#1565c0"/>
<rect x="1904.9" y="301.3" width="22.2" height="2" fill="#1565c0"/>
<rect x="1904.9" y="308.4" width="22.2" height="2" fill="#1565c0"/>
<path d="M1902.4 346 V371.2 H1921 M1902.4 352.8 H1921" fill="none" stroke="#b0bec5" stroke-width="1.8"/>
<path d="M1894.7 332.7 h6.8 l2 1.8 h8.2 v11.5 h-17 Z" fill="#ffa000"/><rect x="1894.7" y="335" width="17" height="11" fill="#ffca28"/>
<path d="M1920.4 345.1 h6.8 l2 1.8 h8.2 v11.5 h-17 Z" fill="#ffa000"/><rect x="1920.4" y="347.4" width="17" height="11" fill="#ffca28"/>
<path d="M1920.4 362 h6.8 l2 1.8 h8.2 v11.5 h-17 Z" fill="#ffa000"/><rect x="1920.4" y="364.3" width="17" height="11" fill="#ffca28"/>
<rect x="1891" y="389.6" width="50.2" height="38.8" fill="#afc0d6" stroke="#8696b2" stroke-width="1"/>
<rect x="1891" y="444.6" width="50.2" height="38.8" fill="#afc0d6" stroke="#8696b2" stroke-width="1"/>
<path d="M1935 447.6 V480.6" stroke="#3f48cc" stroke-width="2.6"/>
<path d="M1931.8 450.2 L1935 445.8 L1938.2 450.2 Z M1931.8 478 L1935 482.4 L1938.2 478 Z" fill="#3f48cc"/>
<rect x="1911.5" y="498.8" width="2.4" height="40.2" fill="#cfd8dc"/><rect x="1918.1" y="498.8" width="2.6" height="40.2" fill="#cfd8dc"/>
<path d="M1893.9 518.9 L1902.6 511.8 V516.8 H1911.4 V521 H1902.6 V526 Z" fill="#2196f3"/>
<path d="M1938.1 518.9 L1929.4 511.8 V516.8 H1920.7 V521 H1929.4 V526 Z" fill="#2196f3"/>
<rect x="2158.1" y="291" width="40" height="28.2" fill="#bbdefb"/>
<rect x="2158.1" y="287.6" width="40" height="4.6" fill="#3f51b5"/>
<path d="M2158.1 288 V282 Q2158.1 278.8 2161.3 278.8 H2168.5 Q2171.7 278.8 2171.7 282 V288 Z" fill="#3f51b5"/>
<path d="M2172.2 288 V282 Q2172.2 278.8 2175.4 278.8 H2182.2 Q2185.4 278.8 2185.4 282 V288 Z" fill="#7986cb"/>
<path d="M2186 288 V282 Q2186 278.8 2189.2 278.8 H2195 Q2198.1 278.8 2198.1 282 V288 Z" fill="#c5cae9"/>
<rect x="2155.7" y="341.3" width="44.7" height="25.2" rx="5" fill="#fff" stroke="#808080" stroke-width="2"/>
<path d="M2160.7 342.6 H2184.9 V365.2 H2160.7 Q2157 365.2 2157 361.5 V346.3 Q2157 342.6 2160.7 342.6 Z" fill="#00acc1"/>
<path d="M2295 645 H2316 L2305.5 656 Z" fill="#000"/>
<path d="M1629 673 H1772 L1775 678.5 H1919 L1958 718.5 H1629 Z" fill="#f0f0f0"/>
<path d="M1772 674 L1815 718.5" stroke="#cfcfcf" stroke-width="1" fill="none"/>
<path d="M1775 678.5 H1919 L1958 718.5" stroke="#cfcfcf" stroke-width="1" fill="none"/>
<path d="M1634.5 675.5 H1770.5 V717.5 H1634.5 Z" stroke="#000" stroke-width="1" stroke-dasharray="1 1" shape-rendering="crispEdges" fill="none"/>
<path d="M1668.5 719.5 H2326" stroke="#000" stroke-width="1" stroke-dasharray="3 3" shape-rendering="crispEdges" fill="none"/>
<path d="M1668.5 765.5 H2326" stroke="#000" stroke-width="1" stroke-dasharray="3 3" shape-rendering="crispEdges" fill="none"/>
<path d="M1668.5 811.5 H2326" stroke="#000" stroke-width="1" stroke-dasharray="3 3" shape-rendering="crispEdges" fill="none"/>
<path d="M1668.5 857.5 H2326" stroke="#000" stroke-width="1" stroke-dasharray="3 3" shape-rendering="crispEdges" fill="none"/>
<path d="M1668.5 903.5 H2326" stroke="#000" stroke-width="1" stroke-dasharray="3 3" shape-rendering="crispEdges" fill="none"/>
<path d="M1668.5 949.5 H2326" stroke="#000" stroke-width="1" stroke-dasharray="3 3" shape-rendering="crispEdges" fill="none"/>
<path d="M1668.5 995.5 H2326" stroke="#000" stroke-width="1" stroke-dasharray="3 3" shape-rendering="crispEdges" fill="none"/>
<path d="M1668.5 1041.5 H2326" stroke="#000" stroke-width="1" stroke-dasharray="3 3" shape-rendering="crispEdges" fill="none"/>
<path d="M1643 1064 H1653 M1648 1059 V1069" stroke="#26347e" stroke-width="2" fill="none"/>
<path d="M1668.5 1087.5 H2326" stroke="#000" stroke-width="1" stroke-dasharray="3 3" shape-rendering="crispEdges" fill="none"/>
<path d="M1643 1110 H1653 M1648 1105 V1115" stroke="#26347e" stroke-width="2" fill="none"/>
<path d="M1668.5 1133.5 H2326" stroke="#000" stroke-width="1" stroke-dasharray="3 3" shape-rendering="crispEdges" fill="none"/>
<path d="M1668.5 1179.5 H2326" stroke="#000" stroke-width="1" stroke-dasharray="3 3" shape-rendering="crispEdges" fill="none"/>
<path d="M1668.5 1225.5 H2326" stroke="#000" stroke-width="1" stroke-dasharray="3 3" shape-rendering="crispEdges" fill="none"/>
<path d="M1668.5 1271.5 H2326" stroke="#000" stroke-width="1" stroke-dasharray="3 3" shape-rendering="crispEdges" fill="none"/>
<path d="M1668.5 1317.5 H2326" stroke="#000" stroke-width="1" stroke-dasharray="3 3" shape-rendering="crispEdges" fill="none"/>
<path d="M1643 1340 H1653 M1648 1335 V1345" stroke="#26347e" stroke-width="2" fill="none"/>
<path d="M1668.5 719 V1360" stroke="#000" stroke-width="1" stroke-dasharray="3 3" shape-rendering="crispEdges" fill="none"/>
<path d="M1983.5 719 V1360" stroke="#000" stroke-width="1" stroke-dasharray="3 3" shape-rendering="crispEdges" fill="none"/>
</svg>
<span class="t" style="left:64.25px;top:15px;font-size:27.9px;line-height:37px;height:37px;transform:scaleX(0.9580);">Application Center - IDE</span>
<span class="t" style="left:17.41px;top:71px;font-size:27px;line-height:36px;height:36px;transform:scaleX(0.9811);-webkit-text-stroke:0.12px #000;">File</span>
<span class="t" style="left:90.73px;top:71px;font-size:27px;line-height:36px;height:36px;transform:scaleX(0.9862);-webkit-text-stroke:0.12px #000;">Commands</span>
<span class="t" style="left:257.35px;top:71px;font-size:27px;line-height:36px;height:36px;transform:scaleX(1.0106);-webkit-text-stroke:0.12px #000;">Development</span>
<span class="t" style="left:449.28px;top:71px;font-size:27px;line-height:36px;height:36px;transform:scaleX(1.0412);-webkit-text-stroke:0.12px #000;">Help</span>
<span class="t" style="left:91.42px;top:180px;font-size:29.5px;line-height:39px;height:39px;transform:scaleX(0.9879);-webkit-text-stroke:0.35px #000;">Start</span>
<span class="t" style="left:133.94px;top:218px;font-size:29.5px;line-height:39px;height:39px;transform:scaleX(0.9536);-webkit-text-stroke:0.35px #000;">Modules</span>
<span class="t" style="left:135.01px;top:256px;font-size:29.5px;line-height:39px;height:39px;transform:scaleX(0.9256);-webkit-text-stroke:0.35px #000;">Samples</span>
<span class="t" style="left:134.99px;top:294px;font-size:29.5px;line-height:39px;height:39px;transform:scaleX(0.9395);-webkit-text-stroke:0.35px #000;">System Apps</span>
<span class="t" style="left:134.97px;top:332px;font-size:29.5px;line-height:39px;height:39px;transform:scaleX(0.9507);-webkit-text-stroke:0.35px #000;">System Management</span>
<span class="t" style="left:133.69px;top:370px;font-size:29.5px;line-height:39px;height:39px;transform:scaleX(1.1228);-webkit-text-stroke:0.35px #000;">UI</span>
<span class="t" style="left:177.00px;top:408px;font-size:29.5px;line-height:39px;height:39px;transform:scaleX(0.9848);-webkit-text-stroke:0.35px #000;">UI Controls</span>
<span class="t" style="left:221.89px;top:446px;font-size:29.5px;line-height:39px;height:39px;transform:scaleX(0.9282);-webkit-text-stroke:0.35px #000;">Acl View</span>
<span class="t" style="left:220.52px;top:484px;font-size:29.5px;line-height:39px;height:39px;transform:scaleX(0.9521);-webkit-text-stroke:0.35px #000;">Chart View</span>
<span class="t" style="left:219.65px;top:522px;font-size:29.5px;line-height:39px;height:39px;transform:scaleX(0.9468);-webkit-text-stroke:0.35px #000;">File Versions View</span>
<span class="t" style="left:219.61px;top:560px;font-size:29.5px;line-height:39px;height:39px;transform:scaleX(0.9632);-webkit-text-stroke:0.35px #000;">Report View</span>
<span class="t" style="left:220.67px;top:598px;font-size:29.5px;line-height:39px;height:39px;transform:scaleX(0.9525);-webkit-text-stroke:0.35px #000;">Security View</span>
<span class="t" style="left:220.00px;top:636px;font-size:29.5px;line-height:39px;height:39px;transform:scaleX(0.9832);-webkit-text-stroke:0.35px #000;">index.mjs</span>
<span class="t" style="left:177.00px;top:674px;font-size:29.5px;line-height:39px;height:39px;transform:scaleX(0.9870);-webkit-text-stroke:0.35px #000;">UI Dialogs</span>
<span class="t" style="left:177.02px;top:712px;font-size:29.5px;line-height:39px;height:39px;transform:scaleX(0.9793);-webkit-text-stroke:0.35px #000;">UI Templates</span>
<span class="t" style="left:177.30px;top:750px;font-size:29.5px;line-height:39px;height:39px;transform:scaleX(0.9832);-webkit-text-stroke:0.35px #000;">index.mjs</span>
<span class="t" style="left:136.13px;top:788px;font-size:29.5px;line-height:39px;height:39px;transform:scaleX(0.9245);-webkit-text-stroke:0.35px #000;">Web</span>
<span class="t" style="left:135.03px;top:826px;font-size:29.5px;line-height:39px;height:39px;transform:scaleX(0.9786);-webkit-text-stroke:0.35px #000;">dev.mjs</span>
<span class="t" style="left:134.30px;top:864px;font-size:29.5px;line-height:39px;height:39px;transform:scaleX(0.9832);-webkit-text-stroke:0.35px #000;">index.mjs</span>
<span class="t" style="left:659.00px;top:183px;font-size:29.5px;line-height:39px;height:39px;transform:scaleX(0.9875);-webkit-text-stroke:0.35px #000;">UI/Controls/SecurityView/index.mjs</span>
<span class="t" style="left:669.09px;top:242px;font-size:29.5px;line-height:39px;height:39px;transform:scaleX(0.9448);-webkit-text-stroke:0.35px #000;">Users and Groups</span>
<span class="t" style="left:1044.62px;top:511px;font-size:29.7px;line-height:39px;height:39px;transform:scaleX(0.9759);">Records View</span>
<span class="t" style="left:1295.48px;top:786px;font-size:29.5px;line-height:39px;height:39px;transform:scaleX(0.9377);-webkit-text-stroke:0.35px #000;">Remove</span>
<span class="t" style="left:1478.69px;top:786px;font-size:29.5px;line-height:39px;height:39px;transform:scaleX(0.9823);-webkit-text-stroke:0.35px #000;">Add...</span>
<span class="t" style="left:673.85px;top:831px;font-size:29.5px;line-height:39px;height:39px;transform:scaleX(0.9891);-webkit-text-stroke:0.35px #000;">Right</span>
<span class="t" style="left:1220.69px;top:831px;font-size:29.5px;line-height:39px;height:39px;transform:scaleX(0.9504);-webkit-text-stroke:0.35px #000;">Allow</span>
<span class="t" style="left:1452.47px;top:831px;font-size:29.5px;line-height:39px;height:39px;transform:scaleX(0.9416);-webkit-text-stroke:0.35px #000;">Deny</span>
<div class="b" style="left:661px;top:271px;width:18px;height:18px;background:#b4d7f3;border:1px solid #0b7bd9"></div>
<div class="b" style="left:661px;top:518px;width:18px;height:18px;background:#b4d7f3;border:1px solid #0b7bd9"></div>
<div class="b" style="left:661px;top:766px;width:18px;height:18px;background:#b4d7f3;border:1px solid #0b7bd9"></div>
<div class="b" style="left:1126px;top:271px;width:18px;height:18px;background:#b4d7f3;border:1px solid #0b7bd9"></div>
<div class="b" style="left:1126px;top:766px;width:18px;height:18px;background:#b4d7f3;border:1px solid #0b7bd9"></div>
<div class="b" style="left:1591px;top:271px;width:18px;height:18px;background:#b4d7f3;border:1px solid #0b7bd9"></div>
<div class="b" style="left:1591px;top:518px;width:18px;height:18px;background:#b4d7f3;border:1px solid #0b7bd9"></div>
<div class="b" style="left:1591px;top:766px;width:18px;height:18px;background:#b4d7f3;border:1px solid #0b7bd9"></div>
<span class="t" style="left:659.68px;top:1683px;font-size:29.5px;line-height:39px;height:39px;transform:scaleX(0.9143);-webkit-text-stroke:0.35px #000;">Code</span>
<span class="t" style="left:739.54px;top:1685px;font-size:29.5px;line-height:39px;height:39px;transform:scaleX(0.9545);-webkit-text-stroke:0.35px #000;">Design</span>
<div class="b" style="left:725px;top:1677px;width:120px;height:53px;border:4.8px solid #ec1c24;border-radius:13px"></div>
<span class="t" style="left:1632.56px;top:229px;font-size:29.5px;line-height:39px;height:39px;transform:scaleX(0.9573);-webkit-text-stroke:0.35px #000;">Standard</span>
<span class="t" style="left:1762.27px;top:232px;font-size:29.5px;line-height:39px;height:39px;transform:scaleX(0.9549);-webkit-text-stroke:0.35px #000;">User Controls</span>
<span class="t" style="left:1949.07px;top:232px;font-size:29.5px;line-height:39px;height:39px;transform:scaleX(0.9568);-webkit-text-stroke:0.35px #000;">User Templates</span>
<span class="t" style="left:1683.11px;top:282px;font-size:29.5px;line-height:39px;height:39px;transform:scaleX(0.9658);-webkit-text-stroke:0.35px #000;">Text View</span>
<span class="t" style="left:1682.29px;top:337px;font-size:29.5px;line-height:39px;height:39px;transform:scaleX(1.0131);-webkit-text-stroke:0.35px #000;">Button</span>
<span class="t" style="left:1682.08px;top:392px;font-size:29.5px;line-height:39px;height:39px;transform:scaleX(0.9804);-webkit-text-stroke:0.35px #000;">Image View</span>
<span class="t" style="left:1681.97px;top:447px;font-size:29.5px;line-height:39px;height:39px;transform:scaleX(0.9408);-webkit-text-stroke:0.35px #000;">Records View</span>
<span class="t" style="left:1683.69px;top:502px;font-size:29.5px;line-height:39px;height:39px;transform:scaleX(0.9784);-webkit-text-stroke:0.35px #000;">Attributes View</span>
<span class="t" style="left:1944.44px;top:282px;font-size:29.5px;line-height:39px;height:39px;transform:scaleX(0.9505);-webkit-text-stroke:0.35px #000;">File View</span>
<span class="t" style="left:1944.46px;top:337px;font-size:29.5px;line-height:39px;height:39px;transform:scaleX(0.9427);-webkit-text-stroke:0.35px #000;">Files View</span>
<span class="t" style="left:1945.12px;top:392px;font-size:29.5px;line-height:39px;height:39px;transform:scaleX(0.9315);-webkit-text-stroke:0.35px #000;">View</span>
<span class="t" style="left:1944.47px;top:447px;font-size:29.5px;line-height:39px;height:39px;transform:scaleX(0.9506);-webkit-text-stroke:0.35px #000;">Scrollable View</span>
<span class="t" style="left:1944.41px;top:502px;font-size:29.5px;line-height:39px;height:39px;transform:scaleX(0.9947);-webkit-text-stroke:0.35px #000;">Splitter</span>
<span class="t" style="left:1630.56px;top:633px;font-size:29.5px;line-height:39px;height:39px;transform:scaleX(0.9531);-webkit-text-stroke:0.35px #000;">granteesView: RecordsView</span>
<span class="t" style="left:1636.12px;top:676px;font-size:29.5px;line-height:39px;height:39px;transform:scaleX(0.9599);-webkit-text-stroke:0.35px #000;">Properties</span>
<span class="t" style="left:1823.57px;top:676px;font-size:29.5px;line-height:39px;height:39px;transform:scaleX(0.9401);-webkit-text-stroke:0.35px #000;">Events</span>
<span class="t" style="left:1667.34px;top:724px;font-size:29.5px;line-height:39px;height:39px;transform:scaleX(0.9715);-webkit-text-stroke:0.35px #000;">name</span>
<span class="t" style="left:1994.57px;top:721px;font-size:29.5px;line-height:39px;height:39px;transform:scaleX(0.9518);-webkit-text-stroke:0.35px #000;">granteesView</span>
<span class="t" style="left:1669.15px;top:770px;font-size:29.5px;line-height:39px;height:39px;transform:scaleX(0.9621);-webkit-text-stroke:0.35px #000;">visible</span>
<span class="t" style="left:1995.62px;top:770px;font-size:29.5px;line-height:39px;height:39px;transform:scaleX(0.9421);-webkit-text-stroke:0.35px #000;">Visible</span>
<span class="t" style="left:1668.01px;top:816px;font-size:29.5px;line-height:39px;height:39px;transform:scaleX(0.9890);-webkit-text-stroke:0.35px #000;">align</span>
<span class="t" style="left:1995.09px;top:816px;font-size:29.5px;line-height:39px;height:39px;transform:scaleX(0.9812);-webkit-text-stroke:0.35px #000;">Top</span>
<span class="t" style="left:1667.13px;top:862px;font-size:29.5px;line-height:39px;height:39px;transform:scaleX(1.0636);-webkit-text-stroke:0.35px #000;">left</span>
<span class="t" style="left:1994.66px;top:859px;font-size:29.5px;line-height:39px;height:39px;transform:scaleX(0.9400);-webkit-text-stroke:0.35px #000;">0</span>
<span class="t" style="left:1668.78px;top:908px;font-size:29.5px;line-height:39px;height:39px;transform:scaleX(1.0302);-webkit-text-stroke:0.35px #000;">top</span>
<span class="t" style="left:1993.46px;top:905px;font-size:29.5px;line-height:39px;height:39px;transform:scaleX(1.0147);-webkit-text-stroke:0.35px #000;">17</span>
<span class="t" style="left:1669.29px;top:954px;font-size:29.5px;line-height:39px;height:39px;transform:scaleX(1.0375);-webkit-text-stroke:0.35px #000;">width</span>
<span class="t" style="left:1994.64px;top:951px;font-size:29.5px;line-height:39px;height:39px;transform:scaleX(0.9871);-webkit-text-stroke:0.35px #000;">392</span>
<span class="t" style="left:1667.18px;top:1000px;font-size:29.5px;line-height:39px;height:39px;transform:scaleX(1.0115);-webkit-text-stroke:0.35px #000;">height</span>
<span class="t" style="left:1994.60px;top:997px;font-size:29.5px;line-height:39px;height:39px;transform:scaleX(1.0201);-webkit-text-stroke:0.35px #000;">35%</span>
<span class="t" style="left:1667.33px;top:1046px;font-size:29.5px;line-height:39px;height:39px;transform:scaleX(0.9766);-webkit-text-stroke:0.35px #000;">margins</span>
<span class="t" style="left:1668.81px;top:1092px;font-size:29.5px;line-height:39px;height:39px;transform:scaleX(1.0296);-webkit-text-stroke:0.35px #000;">font</span>
<span class="t" style="left:1668.81px;top:1138px;font-size:29.5px;line-height:39px;height:39px;transform:scaleX(0.9656);-webkit-text-stroke:0.35px #000;">tabOrder</span>
<span class="t" style="left:1994.66px;top:1135px;font-size:29.5px;line-height:39px;height:39px;transform:scaleX(0.9400);-webkit-text-stroke:0.35px #000;">0</span>
<span class="t" style="left:1667.38px;top:1184px;font-size:29.5px;line-height:39px;height:39px;transform:scaleX(0.9834);-webkit-text-stroke:0.35px #000;">border</span>
<span class="t" style="left:1995.16px;top:1184px;font-size:29.5px;line-height:39px;height:39px;transform:scaleX(0.9062);-webkit-text-stroke:0.35px #000;">Yes</span>
<span class="t" style="left:1667.40px;top:1230px;font-size:29.5px;line-height:39px;height:39px;transform:scaleX(0.9710);-webkit-text-stroke:0.35px #000;">background</span>
<span class="t" style="left:1995.10px;top:1230px;font-size:29.5px;line-height:39px;height:39px;transform:scaleX(0.9674);-webkit-text-stroke:0.35px #000;">Transparent</span>
<span class="t" style="left:1668.83px;top:1276px;font-size:29.5px;line-height:39px;height:39px;transform:scaleX(0.9832);-webkit-text-stroke:0.35px #000;">foreground</span>
<span class="t" style="left:1995.62px;top:1276px;font-size:29.5px;line-height:39px;height:39px;transform:scaleX(0.9757);-webkit-text-stroke:0.35px #000;">WindowText</span>
<span class="t" style="left:1668.00px;top:1322px;font-size:29.5px;line-height:39px;height:39px;transform:scaleX(1.0020);-webkit-text-stroke:0.35px #000;">options</span>
</body></html>
